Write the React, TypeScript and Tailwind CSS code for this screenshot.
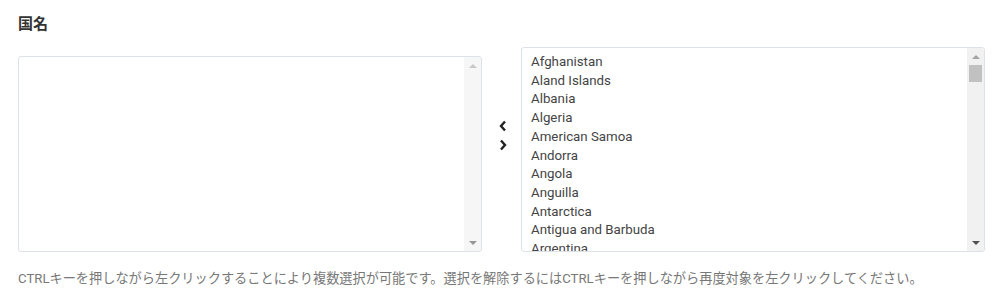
const countries = [
  "Afghanistan",
  "Aland Islands",
  "Albania",
  "Algeria",
  "American Samoa",
  "Andorra",
  "Angola",
  "Anguilla",
  "Antarctica",
  "Antigua and Barbuda",
  "Argentina",
];

function Scrollbar({ thumb }: { thumb?: boolean }) {
  return (
    <div className="flex w-[17px] shrink-0 flex-col items-center bg-[#f1f1f1]">
      <div className="flex h-[17px] w-full items-center justify-center">
        <div className="h-0 w-0 border-x-[4px] border-b-[4px] border-x-transparent border-b-[#a3a3a3]" />
      </div>
      {thumb && <div className="h-[17px] w-[13px] bg-[#c1c1c1]" />}
      <div className="flex-1" />
      <div className="flex h-[17px] w-full items-center justify-center">
        <div className="h-0 w-0 border-x-[4px] border-t-[4px] border-x-transparent border-t-[#505050]" />
      </div>
    </div>
  );
}

export default function App() {
  return (
    <div className="h-[306px] w-[1000px] bg-white font-['Roboto','Noto_Sans_CJK_JP',sans-serif] text-[#333]">
      <div className="px-[18px] pt-[13px]">
        <h2 className="h-[34px] text-[15px] font-bold leading-[22px] text-[#333]">国名</h2>

        <div className="flex items-end">
          <div className="flex h-[196px] w-[464px] shrink-0 overflow-hidden rounded-[3px] border border-[#dde2e8] bg-white">
            <div className="flex-1" />
            <div className="flex opacity-60">
              <Scrollbar />
            </div>
          </div>

          <div className="flex h-[205px] w-[39px] shrink-0 flex-col items-center pl-[3px] pt-[73px]">
            <svg width="10" height="12" viewBox="0 0 10 12" className="mb-[7px]">
              <path d="M7 1.5 L3 6 L7 10.5" fill="none" stroke="#222" strokeWidth="2.4" />
            </svg>
            <svg width="10" height="12" viewBox="0 0 10 12">
              <path d="M3 1.5 L7 6 L3 10.5" fill="none" stroke="#222" strokeWidth="2.4" />
            </svg>
          </div>

          <div className="flex h-[205px] w-[464px] shrink-0 overflow-hidden rounded-[3px] border border-[#dde2e8] bg-white">
            <div className="flex-1 overflow-hidden pl-[9px] pt-[5px] text-[13.3px] leading-[18.7px] text-[#444]">
              {countries.map((c) => (
                <div key={c}>{c}</div>
              ))}
            </div>
            <Scrollbar thumb />
          </div>
        </div>

        <p className="mt-[18px] text-[13.2px] leading-[18px] text-[#777]">
          CTRLキーを押しながら左クリックすることにより複数選択が可能です。選択を解除するにはCTRLキーを押しながら再度対象を左クリックしてください。
        </p>
      </div>
    </div>
  );
}
